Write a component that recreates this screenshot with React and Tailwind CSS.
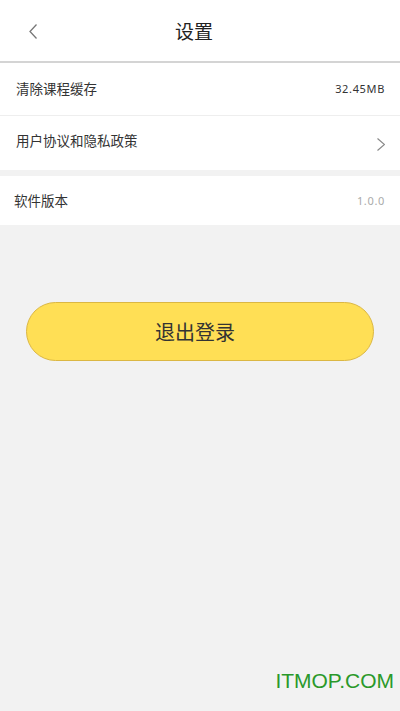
import React from 'react';

// --- Small icons ---

const ChevronLeft = ({ className }) => (
  <svg viewBox="0 0 8 15" className={className} fill="none" stroke="currentColor" strokeWidth="1.3">
    <path d="M7.5 0.5 L1 7.5 L7.5 14.5" />
  </svg>
);

const ChevronRight = ({ className }) => (
  <svg viewBox="0 0 8 13" className={className} fill="none" stroke="currentColor" strokeWidth="1.2">
    <path d="M0.5 0.5 L7.5 6.5 L0.5 12.5" />
  </svg>
);

const Row = ({ label, children, className = '' }) => (
  <div className={`flex items-center justify-between bg-white pl-4 pr-[15px] ${className}`}>
    <span className="text-[13.5px] text-[#333]">{label}</span>
    {children}
  </div>
);

const Settings = () => {
  return (
    <div className="min-h-[711px] bg-[#f2f2f2] flex flex-col" style={{ fontFamily: '"Noto Sans", "Noto Sans CJK SC", sans-serif' }}>
      {/* header */}
      <header className="h-[63px] bg-white border-b-2 border-[#d4d4d4] flex items-center relative">
        <button className="pl-[29px] pt-[1px] text-[#777]">
          <ChevronLeft className="w-[8px] h-[15px]" />
        </button>
        <h1 className="absolute left-0 right-0 text-center text-[19px] text-[#222] pr-[12px] pt-[3px]">设置</h1>
      </header>

      <Row label="清除课程缓存" className="h-[53px] border-b border-[#eeeeee] pt-[1px]">
        <span className="text-[11px] tracking-[0.06em] text-[#333]">32.45MB</span>
      </Row>
      <Row label="用户协议和隐私政策" className="h-[54px] pb-[3px]">
        <ChevronRight className="w-[8px] h-[13px] text-[#888] mt-[5px]" />
      </Row>

      <Row label="软件版本" className="h-[49px] mt-[6px] pl-[14px] pt-[2px]">
        <span className="text-[11px] tracking-[0.06em] text-[#aaa]">1.0.0</span>
      </Row>

      <div className="px-[26px] pt-[77px]">
        <button className="w-full h-[59px] rounded-full bg-[#ffdf55] border-[1.5px] border-[#dbb743] text-[20px] text-[#333] pr-[10px] pt-[3px]">
          退出登录
        </button>
      </div>

      <div className="flex-1" />
      <div className="flex justify-end pr-[6px] pb-[15px]">
        <span className="text-[21px] text-[#2a992a]" style={{ fontFamily: '"Liberation Sans", Arial, sans-serif' }}>ITMOP.COM</span>
      </div>
    </div>
  );
};

export default Settings;
